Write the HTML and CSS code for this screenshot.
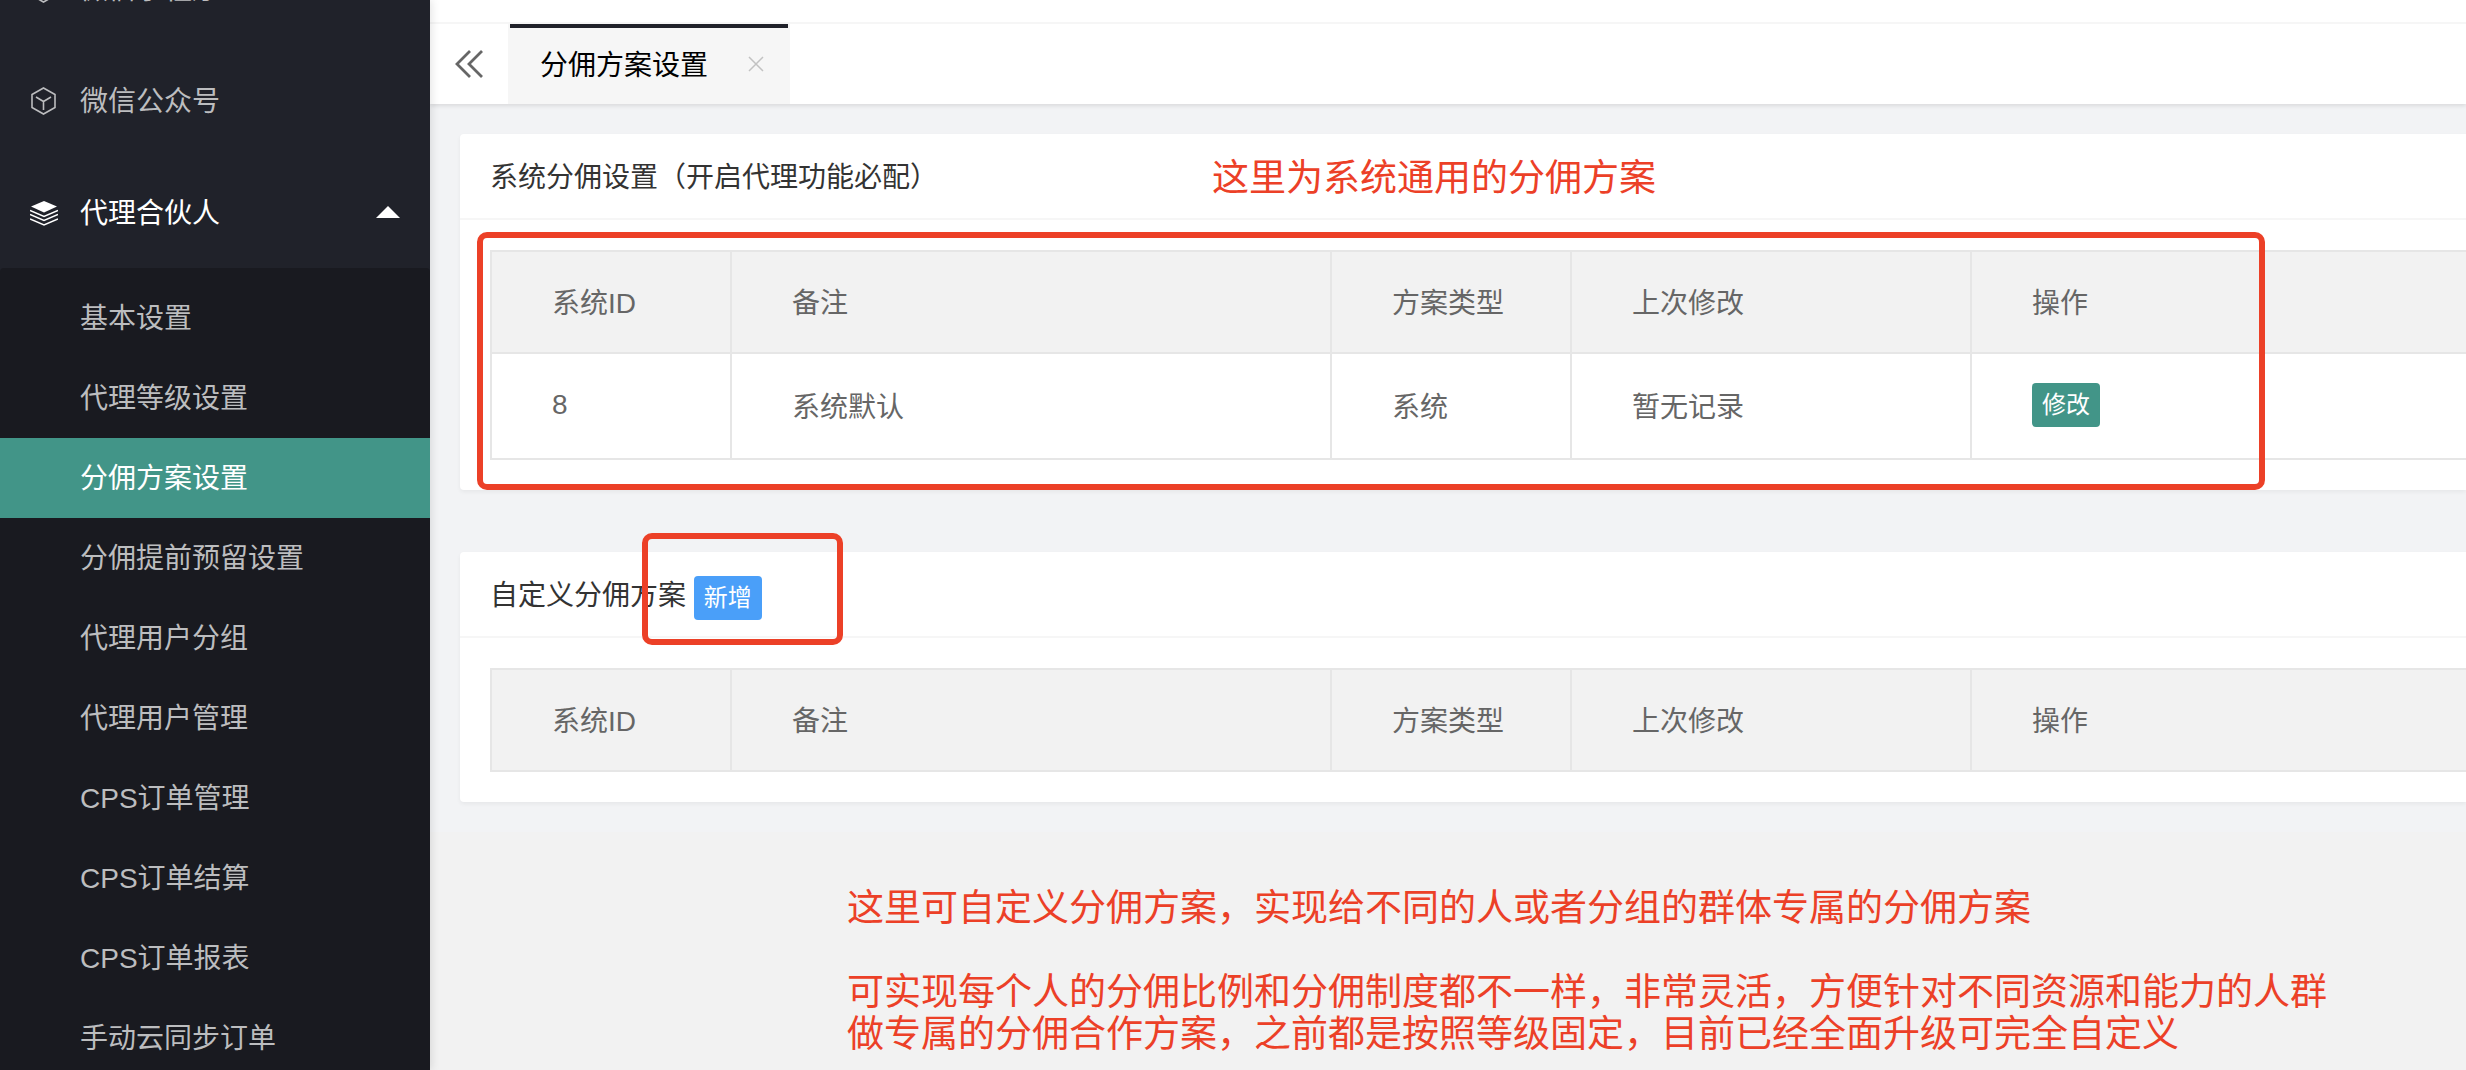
FILE: index.html
```
<!DOCTYPE html>
<html lang="zh-CN">
<head>
    <meta charset="UTF-8">
    <meta name="viewport" content="width=device-width, initial-scale=1.0">
    <title>分佣方案设置</title>
    <link rel="stylesheet" href="styles.css">
</head>
<body>

    <aside class="side">
        <nav class="menu">
            <a class="item" href="#">
                <svg class="icon" viewBox="0 0 28 28"><path d="M13.500 1L25 7.500V20.500L13.500 27L2 20.500V7.500ZM6 10L13.500 14.500L21 10M13.500 14.500V23" fill="none" stroke="currentColor" stroke-width="1.600"/></svg>
                <span>微信小程序</span>
            </a>
            <a class="item" href="#">
                <svg class="icon" viewBox="0 0 28 28"><path d="M13.500 1L25 7.500V20.500L13.500 27L2 20.500V7.500ZM6 10L13.500 14.500L21 10M13.500 14.500V23" fill="none" stroke="currentColor" stroke-width="1.600"/></svg>
                <span>微信公众号</span>
            </a>
            <a class="item open" href="#">
                <svg class="icon" viewBox="0 0 28 28"><path d="M14 2L27 7.500L14 13.500L1 7.500Z" fill="currentColor"/><path d="M0 11.500L14 17.500L28 11.500M0 15.500L14 21.500L28 15.500M0 20L14 26L28 20" fill="none" stroke="currentColor" stroke-width="1.500"/></svg>
                <span>代理合伙人</span>
                <i class="caret"></i>
            </a>
            <div class="sub">
                <a href="#">基本设置</a>
                <a href="#">代理等级设置</a>
                <a class="active" href="#">分佣方案设置</a>
                <a href="#">分佣提前预留设置</a>
                <a href="#">代理用户分组</a>
                <a href="#">代理用户管理</a>
                <a href="#">CPS订单管理</a>
                <a href="#">CPS订单结算</a>
                <a href="#">CPS订单报表</a>
                <a href="#">手动云同步订单</a>
            </div>
        </nav>
    </aside>

    <main class="main">
        <header class="tabs">
            <button class="prev" aria-label="向左">
                <svg viewBox="0 0 28 28"><path d="M15 1L2 14L15 27M27 1L14 14L27 27" fill="none" stroke="currentColor" stroke-width="2.800"/></svg>
            </button>
            <div class="tab">
                <a href="#">分佣方案设置</a>
                <button class="close" aria-label="关闭">
                    <svg viewBox="0 0 16 16"><path d="M1 1L15 15M15 1L1 15" fill="none" stroke="currentColor" stroke-width="1.500"/></svg>
                </button>
            </div>
        </header>

        <div class="content">
            <section class="card">
                <h2>系统分佣设置（开启代理功能必配）</h2>
                <div class="card-body">
                    <table>
                        <colgroup><col class="w-id"><col class="w-note"><col class="w-type"><col class="w-time"><col></colgroup>
                        <thead>
                            <tr><th>系统ID</th><th>备注</th><th>方案类型</th><th>上次修改</th><th>操作</th></tr>
                        </thead>
                        <tbody>
                            <tr><td>8</td><td>系统默认</td><td>系统</td><td>暂无记录</td><td><button class="btn">修改</button></td></tr>
                        </tbody>
                    </table>
                </div>
            </section>

            <section class="card">
                <h2>自定义分佣方案 <button class="btn blue">新增</button></h2>
                <div class="card-body">
                    <table>
                        <colgroup><col class="w-id"><col class="w-note"><col class="w-type"><col class="w-time"><col></colgroup>
                        <thead>
                            <tr><th>系统ID</th><th>备注</th><th>方案类型</th><th>上次修改</th><th>操作</th></tr>
                        </thead>
                    </table>
                </div>
            </section>
        </div>
    </main>

    <!-- red notes over the page -->
    <div class="mark mark-table"></div>
    <div class="mark mark-add"></div>
    <p class="note note-top">这里为系统通用的分佣方案</p>
    <p class="note note-bottom">这里可自定义分佣方案，实现给不同的人或者分组的群体专属的分佣方案<br><br>可实现每个人的分佣比例和分佣制度都不一样，非常灵活，方便针对不同资源和能力的人群<br>做专属的分佣合作方案，之前都是按照等级固定，目前已经全面升级可完全自定义</p>

</body>
</html>
```

FILE: styles.css
```
* {
    box-sizing: border-box;
}
body {
    display: flex;
    position: relative;
    height: 100vh;
    margin: 0;
    overflow: hidden;
    background-color: #f2f2f2;
    color: #666;
    font-family: "Liberation Sans", "Noto Sans CJK SC", sans-serif;
    font-size: 28px;
}
a {
    color: inherit;
    text-decoration: none;
}
button {
    padding: 0;
    border: none;
    background: none;
    color: inherit;
    font: inherit;
    cursor: pointer;
}
svg {
    display: block;
}

/* sidebar */
.side {
    flex: none;
    width: 430px;
    overflow: hidden;
    background-color: #20222a;
    color: #bcbdbf;
    box-shadow: 2px 0 8px rgba(0, 0, 0, 0.1);
    z-index: 2;
}
.menu {
    margin-top: -68px; /* scrolled */
}
.item {
    display: flex;
    align-items: center;
    height: 112px;
    padding: 0 30px;
}
.item span {
    padding-bottom: 2px;
}
.icon {
    width: 28px;
    height: 28px;
    margin-top: 2px;
    margin-right: 22px;
}
.open {
    color: #fff;
}
.caret {
    margin-left: auto;
    border: 12px solid transparent;
    border-top: none;
    border-bottom-color: #fff;
}
.sub {
    padding: 10px 0;
    border-radius: 4px;
    background-color: #191a20;
}
.sub a {
    display: block;
    height: 80px;
    padding-left: 80px;
    line-height: 82px;
}
.sub .active {
    background-color: #429588;
    color: #fff;
}

/* tabs */
.main {
    flex: 1;
    min-width: 0;
}
.tabs {
    display: flex;
    position: relative;
    height: 104px;
    padding-top: 22px;
    background-color: #fff;
    box-shadow: 0 2px 4px rgba(0, 0, 0, 0.1);
}
.tabs::before {
    content: "";
    position: absolute;
    top: 22px;
    left: 0;
    right: 0;
    height: 2px;
    background-color: #f6f6f6;
}
.prev {
    width: 78px;
    padding-top: 2px;
    padding-left: 25px;
}
.prev svg {
    width: 28px;
    height: 28px;
}
.tab {
    display: flex;
    align-items: center;
    justify-content: space-between;
    position: relative;
    width: 282px;
    padding: 0 26px 0 32px;
    background-color: #f6f6f6;
    color: #000;
}
.tab::before {
    content: "";
    position: absolute;
    top: 2px;
    left: 2px;
    right: 2px;
    height: 4px;
    background-color: #20222a;
}
.close {
    padding-top: 2px;
    color: #c2c2c2;
}
.close svg {
    width: 16px;
    height: 16px;
}

/* cards */
.content {
    padding: 30px 0 30px 30px;
    background-color: #f2f3f5;
}
.card {
    border-radius: 4px 0 0 4px;
    background-color: #fff;
    box-shadow: 0 2px 4px rgba(0, 0, 0, 0.05);
}
.card + .card {
    margin-top: 62px;
}
.card h2 {
    height: 86px;
    margin: 0;
    padding-left: 30px;
    border-bottom: 2px solid #f6f6f6;
    color: #333;
    font-size: 28px;
    font-weight: normal;
    line-height: 87px;
}
.card-body {
    padding: 30px 0 30px 30px;
}
table {
    width: 100%;
    border-collapse: collapse;
    border: 2px solid #e6e6e6;
    border-right: none;
    table-layout: fixed;
}
.w-id, .w-type {
    width: 240px;
}
.w-note {
    width: 600px;
}
.w-time {
    width: 400px;
}
th, td {
    height: 102px;
    padding: 0 60px 2px;
    border: 2px solid #e6e6e6;
    font-weight: normal;
    text-align: left;
}
td {
    height: 106px;
}
th:last-child, td:last-child {
    border-right: none;
}
th {
    background-color: #f2f2f2;
}
.btn {
    height: 44px;
    padding: 0 10px;
    border-radius: 4px;
    background-color: #429588;
    color: #fff;
    font-size: 24px;
    line-height: 44px;
    vertical-align: middle;
}
.blue {
    background-color: #4a9ff9;
}

/* red notes */
.mark {
    position: absolute;
    border: 6px solid #ec4027;
    border-radius: 10px;
    z-index: 3;
}
.mark-table {
    top: 232px;
    left: 477px;
    width: 1788px;
    height: 258px;
}
.mark-add {
    top: 533px;
    left: 642px;
    width: 201px;
    height: 112px;
}
.note {
    position: absolute;
    margin: 0;
    color: #ec4027;
    font-size: 37px;
    line-height: 42px;
    white-space: nowrap;
    z-index: 3;
}
.note-top {
    top: 158px;
    left: 1212px;
}
.note-bottom {
    top: 888px;
    left: 847px;
}
```
